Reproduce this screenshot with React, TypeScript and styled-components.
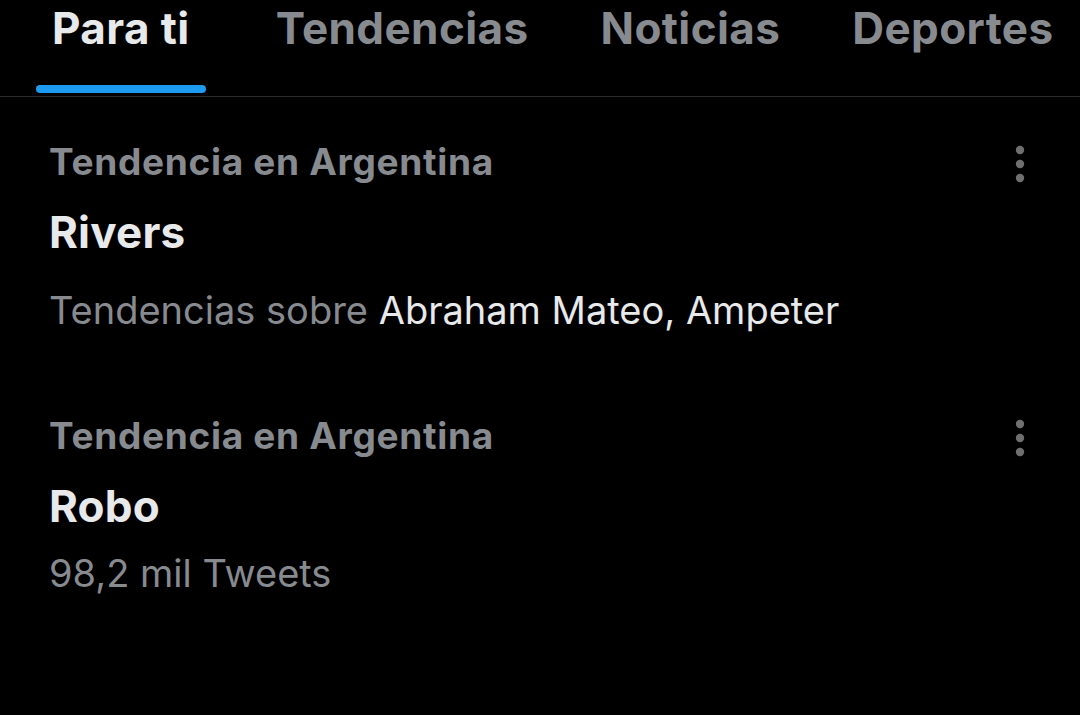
import React from "react";
import styled, { createGlobalStyle } from "styled-components";

const GlobalStyle = createGlobalStyle`
  html, body {
    margin: 0;
    padding: 0;
    background: #000;
  }
  body {
    font-family: Inter, "Noto Sans", "Liberation Sans", sans-serif;
    -webkit-font-smoothing: antialiased;
  }
`;

const Page = styled.div`
  width: 1080px;
  height: 715px;
  background: #000;
  overflow: hidden;
`;

const TabBar = styled.nav`
  display: flex;
  align-items: flex-start;
  height: 96px;
  border-bottom: 1px solid #2a2d30;
  padding-left: 36px;
  gap: 40px;
`;

const Tab = styled.div<{ $extra?: number }>`
  display: flex;
  flex-direction: column;
  align-items: center;
  padding: 0 16px;
  margin-right: ${(p) => p.$extra ?? 0}px;
`;

const TabLabel = styled.span<{ $active?: boolean }>`
  font-size: 44px;
  line-height: 57px;
  font-weight: 700;
  letter-spacing: 0.4px;
  color: ${(p) => (p.$active ? "#e7e9ea" : "#878b90")};
  white-space: nowrap;
`;

const Indicator = styled.div`
  align-self: stretch;
  margin: 28px -16px 0;
  height: 8px;
  border-radius: 4px;
  background: #1d9bf0;
`;

const List = styled.section`
  display: flex;
  flex-direction: column;
`;

const Item = styled.article<{ $pb: number }>`
  display: flex;
  align-items: flex-start;
  padding: 43px 48px ${(p) => p.$pb}px 49px;
`;

const Body = styled.div`
  flex: 1;
  display: flex;
  flex-direction: column;
`;

const Context = styled.div`
  font-size: 37px;
  line-height: 44px;
  font-weight: 700;
  color: #878b90;
  letter-spacing: 0.7px;
`;

const Title = styled.div`
  margin-top: 22px;
  font-size: 44px;
  line-height: 52px;
  font-weight: 700;
  color: #e7e9ea;
  letter-spacing: 0.2px;
`;

const Meta = styled.div<{ $mt: number }>`
  margin-top: ${(p) => p.$mt}px;
  font-size: 38px;
  line-height: 48px;
  font-weight: 400;
  color: #878b90;
  white-space: nowrap;
`;

const Strong = styled.span`
  color: #e7e9ea;
`;

const More = styled.svg`
  flex: none;
  width: 24px;
  height: 40px;
  margin-top: 5px;
  fill: #6f6f70;
`;

const Dots = () => (
  <More viewBox="0 0 24 40">
    <circle cx="12" cy="5" r="4.2" />
    <circle cx="12" cy="19" r="4.2" />
    <circle cx="12" cy="33" r="4.2" />
  </More>
);

const tabs = ["Para ti", "Tendencias", "Noticias", "Deportes"];

export default function App() {
  return (
    <Page>
      <GlobalStyle />
      <TabBar>
        {tabs.map((t, i) => (
          <Tab key={t} $extra={i === 0 ? 14 : 0}>
            <TabLabel $active={i === 0}>{t}</TabLabel>
            {i === 0 && <Indicator />}
          </Tab>
        ))}
      </TabBar>
      <List>
        <Item $pb={37}>
          <Body>
            <Context>Tendencia en Argentina</Context>
            <Title>Rivers</Title>
            <Meta $mt={28}>
              Tendencias sobre <Strong>Abraham Mateo, Ampeter</Strong>
            </Meta>
          </Body>
          <Dots />
        </Item>
        <Item $pb={0}>
          <Body>
            <Context>Tendencia en Argentina</Context>
            <Title>Robo</Title>
            <Meta $mt={17}>98,2 mil Tweets</Meta>
          </Body>
          <Dots />
        </Item>
      </List>
    </Page>
  );
}
